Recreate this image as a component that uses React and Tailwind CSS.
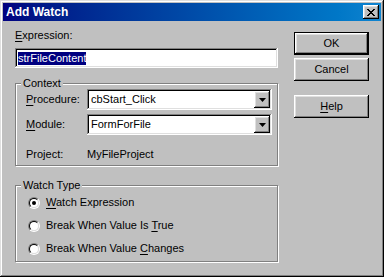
const raised =
    'shadow-[inset_-1px_-1px_#000,inset_1px_1px_#fff,inset_-2px_-2px_#808080,inset_2px_2px_#dfdfdf]';
const sunken =
    'shadow-[inset_-1px_-1px_#fff,inset_1px_1px_#808080,inset_-2px_-2px_#dfdfdf,inset_2px_2px_#000]';

function Key({ children }) {
    return <span className="underline underline-offset-[2px]">{children}</span>;
}

function GroupBox({ label, className, children }) {
    return (
        <div
            className={
                'relative border border-[#808080] shadow-[1px_1px_0_#fff,inset_1px_1px_0_#fff] ' +
                className
            }
        >
            <span className="absolute left-[5px] top-[-7px] bg-[#c0c0c0] px-[2px] leading-[13px]">
                {label}
            </span>
            {children}
        </div>
    );
}

function Combo({ value }) {
    return (
        <div className={'flex h-[21px] w-[185px] items-center bg-white p-[2px] ' + sunken}>
            <span className="flex-1 pl-[2px] leading-[13px]">{value}</span>
            <div className={'flex h-[17px] w-[16px] items-center justify-center bg-[#c0c0c0] ' + raised}>
                <svg width="7" height="4" viewBox="0 0 7 4">
                    <path d="M0 0h7L3.5 4z" fill="#000" />
                </svg>
            </div>
        </div>
    );
}

function Radio({ checked, children }) {
    return (
        <div className="flex h-[13px] items-center gap-[6px]">
            <div className="flex h-[12px] w-[12px] items-center justify-center rounded-full border border-t-[#808080] border-l-[#808080] border-b-white border-r-white">
                <div className="flex h-[10px] w-[10px] items-center justify-center rounded-full border border-t-black border-l-black border-b-[#dfdfdf] border-r-[#dfdfdf] bg-white">
                    {checked && <div className="h-[4px] w-[4px] rounded-full bg-black" />}
                </div>
            </div>
            <span className="leading-[13px]">{children}</span>
        </div>
    );
}

function Button({ isDefault, children }) {
    return (
        <div
            className={
                'flex h-[23px] w-[75px] items-center justify-center bg-[#c0c0c0] ' +
                (isDefault ? 'border border-black ' : '') +
                raised
            }
        >
            <span className="leading-[13px]">{children}</span>
        </div>
    );
}

export default function App() {
    return (
        <div
            className={
                "flex h-[277px] w-[384px] flex-col bg-[#c0c0c0] p-[3px] font-['Liberation_Sans',Arial,sans-serif] text-[11px] text-black shadow-[inset_-1px_-1px_#000,inset_1px_1px_#dfdfdf,inset_-2px_-2px_#808080,inset_2px_2px_#fff]"
            }
        >
            <div className="flex h-[18px] shrink-0 items-center justify-between bg-gradient-to-r from-[#000080] to-[#1084d0] pl-[3px] pr-[2px]">
                <span className="text-[12px] font-bold leading-[14px] text-white">Add Watch</span>
                <div className={'flex h-[14px] w-[16px] items-center justify-center bg-[#c0c0c0] ' + raised}>
                    <svg width="8" height="7" viewBox="0 0 8 7" shapeRendering="crispEdges">
                        <path
                            d="M0 0h2v1h-2zM6 0h2v1h-2zM1 1h2v1h-2zM5 1h2v1h-2zM2 2h4v1h-4zM3 3h2v1h-2zM2 4h4v1h-4zM1 5h2v1h-2zM5 5h2v1h-2zM0 6h2v1h-2zM6 6h2v1h-2z"
                            fill="#000"
                        />
                    </svg>
                </div>
            </div>

            <div className="flex flex-1 gap-[16px] pl-[12px] pt-[8px]">
                <div className="flex w-[263px] flex-col">
                    <span className="leading-[13px]">
                        <Key>E</Key>xpression:
                    </span>
                    <div className={'mt-[6px] flex h-[20px] items-center bg-white px-[3px] ' + sunken}>
                        <span className="bg-[#000080] leading-[13px] text-white">strFileContent</span>
                    </div>

                    <GroupBox label="Context" className="mt-[15px] h-[83px] w-[263px] pl-[10px] pr-[5px] pt-[5px]">
                        <div className="flex flex-col gap-[4px]">
                            <div className="flex items-center">
                                <span className="w-[61px] leading-[13px]">
                                    <Key>P</Key>rocedure:
                                </span>
                                <Combo value="cbStart_Click" />
                            </div>
                            <div className="flex items-center">
                                <span className="w-[61px] leading-[13px]">
                                    <Key>M</Key>odule:
                                </span>
                                <Combo value="FormForFile" />
                            </div>
                            <div className="mt-[9px] flex items-center">
                                <span className="w-[61px] leading-[13px]">Project:</span>
                                <span className="leading-[13px]">MyFileProject</span>
                            </div>
                        </div>
                    </GroupBox>

                    <GroupBox label="Watch Type" className="mt-[19px] h-[77px] w-[263px] pl-[12px] pt-[10px]">
                        <div className="flex flex-col gap-[10px]">
                            <Radio checked>
                                <Key>W</Key>atch Expression
                            </Radio>
                            <Radio>
                                Break When Value Is <Key>T</Key>rue
                            </Radio>
                            <Radio>
                                Break When Value <Key>C</Key>hanges
                            </Radio>
                        </div>
                    </GroupBox>
                </div>

                <div className="flex w-[75px] flex-col pt-[3px]">
                    <Button isDefault>OK</Button>
                    <div className="mt-[3px]">
                        <Button>Cancel</Button>
                    </div>
                    <div className="mt-[14px]">
                        <Button>
                            <Key>H</Key>elp
                        </Button>
                    </div>
                </div>
            </div>
        </div>
    );
}
